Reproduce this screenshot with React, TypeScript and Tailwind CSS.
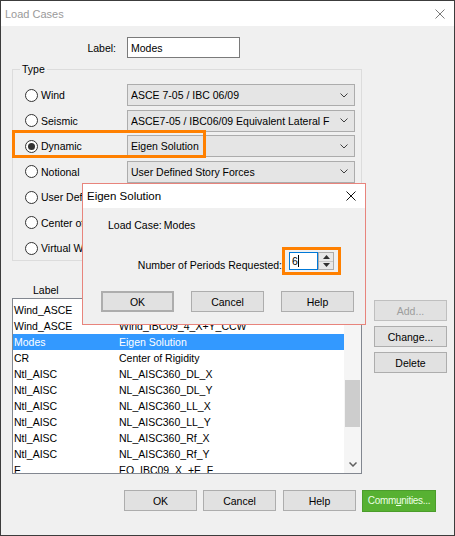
import React from "react";

function Radio({ checked, label }: { checked?: boolean; label: string }) {
  return (
    <div className="flex items-center w-[102px] shrink-0 overflow-hidden whitespace-nowrap">
      <span className="w-[13px] h-[13px] rounded-full border border-[#333333] bg-white flex items-center justify-center shrink-0">
        {checked && <span className="w-[7px] h-[7px] rounded-full bg-[#333333]" />}
      </span>
      <span className="ml-[3px]">{label}</span>
    </div>
  );
}

function Combo({ text }: { text: string }) {
  return (
    <div className="w-[228px] h-[22px] bg-[#e5e5e5] border border-[#acacac] flex items-center pl-[3px] pr-[6px]">
      <span className="flex-1 whitespace-nowrap overflow-hidden">{text}</span>
      <svg width="8" height="5" viewBox="0 0 8 5" className="shrink-0">
        <path d="M0.5 0.5 L4 4 L7.5 0.5" fill="none" stroke="#404040" strokeWidth="1" />
      </svg>
    </div>
  );
}

function Btn({
  children,
  className = "",
}: {
  children: React.ReactNode;
  className?: string;
}) {
  return (
    <div
      className={`h-[21px] w-[73px] bg-[#e1e1e1] border border-[#adadad] flex items-center justify-center shrink-0 ${className}`}
    >
      {children}
    </div>
  );
}

const rows: [string, string, boolean?][] = [
  ["Wind_ASCE", ""],
  ["Wind_ASCE", "Wind_IBC09_4_X+Y_CCW"],
  ["Modes", "Eigen Solution", true],
  ["CR", "Center of Rigidity"],
  ["Ntl_AISC", "NL_AISC360_DL_X"],
  ["Ntl_AISC", "NL_AISC360_DL_Y"],
  ["Ntl_AISC", "NL_AISC360_LL_X"],
  ["Ntl_AISC", "NL_AISC360_LL_Y"],
  ["Ntl_AISC", "NL_AISC360_Rf_X"],
  ["Ntl_AISC", "NL_AISC360_Rf_Y"],
  ["E", "EQ_IBC09_X_+E_F"],
];

export default function App() {
  return (
    <div className="w-[455px] h-[536px] relative bg-[#f0f0f0] border border-[#3c3c3c] text-[10.5px] leading-[14px] text-black font-['Liberation_Sans',Arial,sans-serif] overflow-hidden">
      {/* Title bar */}
      <div className="h-[25px] bg-white flex items-center justify-between pl-[4px] pr-[9px]">
        <span className="text-[11px] text-[#9a9a9a]">Load Cases</span>
        <svg width="10" height="10" viewBox="0 0 10 10">
          <path d="M0.5 0.5 L9.5 9.5 M9.5 0.5 L0.5 9.5" stroke="#7a7a7a" strokeWidth="1" fill="none" />
        </svg>
      </div>

      {/* Label row */}
      <div className="mt-[11px] flex items-center h-[21px]">
        <span className="w-[115px] text-right">Label:</span>
        <div className="ml-[11px] w-[113px] h-[21px] bg-white border border-[#7a7a7a] flex items-center pl-[3px]">
          Modes
        </div>
      </div>

      {/* Type group */}
      <fieldset className="ml-[11px] mt-[4px] w-[350px] border border-[#dcdcdc] pb-[1px]">
        <legend className="ml-[7px] px-[2px] leading-[14px]">Type</legend>
        <div className="pt-[8px] pl-[12px] flex flex-col gap-[3.5px]">
          <div className="flex items-center h-[22px]">
            <Radio label="Wind" />
            <Combo text="ASCE 7-05 / IBC 06/09" />
          </div>
          <div className="flex items-center h-[22px]">
            <Radio label="Seismic" />
            <Combo text="ASCE7-05 / IBC06/09 Equivalent Lateral F" />
          </div>
          <div className="flex items-center h-[22px]">
            <Radio label="Dynamic" checked />
            <Combo text="Eigen Solution" />
          </div>
          <div className="flex items-center h-[22px]">
            <Radio label="Notional" />
            <Combo text="User Defined Story Forces" />
          </div>
          <div className="flex items-center h-[22px]">
            <Radio label="User Defined" />
          </div>
          <div className="flex items-center h-[22px]">
            <Radio label="Center of Rigidity" />
          </div>
          <div className="flex items-center h-[22px]">
            <Radio label="Virtual Work" />
          </div>
        </div>
      </fieldset>

      {/* List + side buttons */}
      <div className="flex">
        <div className="ml-[11px] w-[350px] flex flex-col">
          <div className="mt-[22px] h-[14px] pl-[21px]">Label</div>
          <div className="mt-[1px] h-[176px] border border-[#828790] bg-white flex overflow-hidden">
            <div className="flex-1 pt-[3px] overflow-hidden">
              {rows.map(([a, b, sel], i) => (
                <div
                  key={i}
                  className={`flex h-[16px] items-center whitespace-nowrap ${sel ? "bg-[#3399ff] text-white" : ""}`}
                >
                  <span className="w-[106px] pl-[1px] shrink-0">{a}</span>
                  <span>{b}</span>
                </div>
              ))}
            </div>
            <div className="w-[17px] shrink-0 flex flex-col bg-[#f5f5f5]">
              <div className="h-[17px] flex items-center justify-center">
                <svg width="8" height="5" viewBox="0 0 8 5">
                  <path d="M0.5 4.5 L4 1 L7.5 4.5" fill="none" stroke="#606060" strokeWidth="1.5" />
                </svg>
              </div>
              <div className="flex-1">
                <div className="mt-[64px] h-[47px] mx-[1px] bg-[#cdcdcd]" />
              </div>
              <div className="h-[17px] flex items-center justify-center">
                <svg width="8" height="5" viewBox="0 0 8 5">
                  <path d="M0.5 0.5 L4 4 L7.5 0.5" fill="none" stroke="#606060" strokeWidth="1.5" />
                </svg>
              </div>
            </div>
          </div>
        </div>
        <div className="ml-[12px] mt-[39px] flex flex-col gap-[5px]">
          <Btn className="bg-[#cccccc] border-[#bfbfbf] text-[#9d9d9d]">Add...</Btn>
          <Btn>Change...</Btn>
          <Btn>Delete</Btn>
        </div>
      </div>

      {/* Bottom buttons */}
      <div className="mt-[16px] ml-[123px] flex">
        <Btn>OK</Btn>
        <Btn className="ml-[6px]">Cancel</Btn>
        <Btn className="ml-[7px]">Help</Btn>
        <div className="ml-[6px] h-[22px] w-[74px] bg-[#57b132] border border-[#4b9d2b] text-[#ecffe4] text-[10px] tracking-[-0.3px] flex items-center justify-center whitespace-nowrap">
          <span>
            Comm<span className="underline">u</span>nities...
          </span>
        </div>
      </div>

      {/* Orange highlight around Dynamic */}
      <div className="absolute left-[11px] top-[129px] w-[194px] h-[28px] border-[3px] border-[#ff8000] pointer-events-none" />

      {/* Eigen Solution dialog */}
      <div className="absolute left-[81px] top-[182px] w-[284px] h-[142px] border border-[#e8847c] bg-[#f0f0f0] flex flex-col">
        <div className="h-[24px] shrink-0 bg-white flex items-center justify-between pl-[4px] pr-[9px]">
          <span className="text-[11.5px]">Eigen Solution</span>
          <svg width="10" height="10" viewBox="0 0 10 10">
            <path d="M0.5 0.5 L9.5 9.5 M9.5 0.5 L0.5 9.5" stroke="#111111" strokeWidth="1" fill="none" />
          </svg>
        </div>
        <div className="mt-[10px] pl-[25px] h-[14px]">Load Case:&#8201;Modes</div>
        <div className="mt-[15px] flex items-end h-[28px]">
          <span className="w-[199px] text-right mb-[3px] whitespace-nowrap">Number of Periods Requested:</span>
          <div className="w-[59px] h-[28px] border-[3px] border-[#ff8000] flex items-center pl-[4px]">
            <div className="w-[29px] h-[18px] bg-white border border-[#0078d7] flex items-center pl-[2px]">
              <span>6</span>
              <span className="w-[1px] h-[12px] bg-black" />
            </div>
            <div className="w-[16px] h-[18px] border border-[#acacac] bg-[#e8e8e8] flex flex-col">
              <div className="flex-1 flex items-center justify-center border-b border-[#c8c8c8]">
                <svg width="7" height="4" viewBox="0 0 7 4">
                  <path d="M0 4 L3.5 0 L7 4 Z" fill="#303030" />
                </svg>
              </div>
              <div className="flex-1 flex items-center justify-center">
                <svg width="7" height="4" viewBox="0 0 7 4">
                  <path d="M0 0 L3.5 4 L7 0 Z" fill="#303030" />
                </svg>
              </div>
            </div>
          </div>
        </div>
        <div className="mt-[16px] pl-[18px] flex gap-[17px]">
          <Btn className="border-2 border-[#0078d7]">OK</Btn>
          <Btn>Cancel</Btn>
          <Btn>Help</Btn>
        </div>
      </div>
    </div>
  );
}
